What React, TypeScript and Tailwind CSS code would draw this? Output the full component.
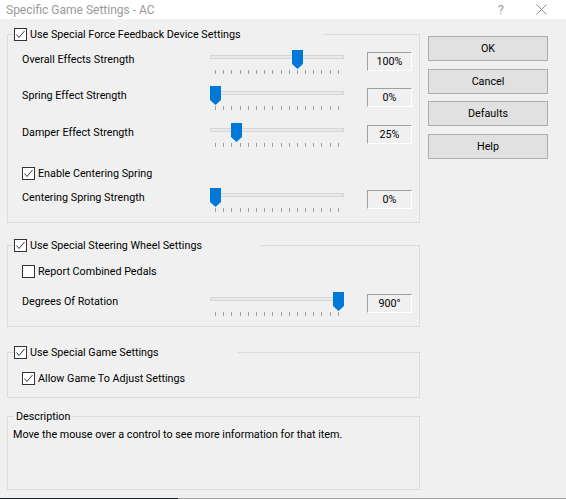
import React from 'react';

const CheckBox = ({ checked }: { checked: boolean }) => (
  <span className="flex h-[13px] w-[13px] shrink-0 items-center justify-center border border-[#333333] bg-white">
    {checked && (
      <svg width="11" height="11" viewBox="0 0 11 11">
        <path d="M1.5 5.5 L4 8.5 L9.5 2" stroke="#333333" strokeWidth="1" fill="none" />
      </svg>
    )}
  </span>
);

const CheckLabel = ({ checked, label }: { checked: boolean; label: string }) => (
  <div className="flex h-[14px] items-center gap-[3px] leading-[14px]">
    <CheckBox checked={checked} />
    <span className="pt-[2px]">{label}</span>
  </div>
);

const Slider = ({ frac }: { frac: number }) => (
  <div className="relative h-[24px] w-[134px]">
    <div className="mt-[5px] h-[4px] w-full border border-[#d6d6d6] bg-[#e7eaea]" />
    <div className="mt-[11px] flex justify-between px-[5px]">
      {Array.from({ length: 16 }).map((_, i) => (
        <span key={i} className="h-[4px] w-px bg-[#a0a0a0]" />
      ))}
    </div>
    <svg
      className="absolute top-0"
      style={{ left: Math.round(frac * 123) }}
      width="11"
      height="19"
      viewBox="0 0 11 19"
    >
      <polygon points="0,0 11,0 11,14 5.5,19 0,14" fill="#0078d7" />
    </svg>
  </div>
);

const SliderRow = ({
  label,
  frac,
  value,
  className,
}: {
  label: string;
  frac: number;
  value: string;
  className: string;
}) => (
  <div className={`flex items-start pl-[14px] ${className}`}>
    <span className="mt-[3px] w-[188px] leading-[14px]">{label}</span>
    <Slider frac={frac} />
    <div className="ml-[23px] mt-[2px] flex h-[19px] w-[45px] items-center justify-center border border-t-[#a0a0a0] border-l-[#a0a0a0] border-b-white border-r-white pt-[1px]">
      {value}
    </div>
  </div>
);

const Button = ({ label, className }: { label: string; className: string }) => (
  <button
    className={`flex h-[25px] w-[120px] items-center justify-center border border-[#adadad] bg-[#e1e1e1] pt-[1px] text-black ${className}`}
  >
    {label}
  </button>
);

export default function App() {
  return (
    <div className="flex h-[499px] w-[566px] flex-col overflow-hidden bg-[#f0f0f0] font-['Roboto',sans-serif] text-[10.75px] text-black">
      {/* title bar */}
      <div className="flex h-[19px] shrink-0 items-center bg-white text-[12px] text-[#9a9a9a]">
        <span className="ml-[6px] leading-[14px]">Specific Game Settings - AC</span>
        <span className="ml-auto mr-[32px] text-[13px] leading-[14px] text-[#a0a0a0]">?</span>
        <svg className="mr-[19px]" width="11" height="11" viewBox="0 0 11 11">
          <path d="M0.5 0.5 L10.5 10.5 M10.5 0.5 L0.5 10.5" stroke="#909090" strokeWidth="1" fill="none" />
        </svg>
      </div>

      <div className="flex flex-1">
        {/* left column */}
        <div className="ml-[7px] flex w-[413px] flex-col">
          <fieldset className="mt-[8px] border border-[#dcdcdc] pb-[10px]">
            <legend className="ml-[6px] w-[309px]">
              <CheckLabel checked label="Use Special Force Feedback Device Settings" />
            </legend>
            <SliderRow className="mt-[9px]" label="Overall Effects Strength" frac={100 / 150} value="100%" />
            <SliderRow className="mt-[12px]" label="Spring Effect Strength" frac={0} value="0%" />
            <SliderRow className="mt-[13px]" label="Damper Effect Strength" frac={25 / 150} value="25%" />
            <div className="mt-[19px] pl-[14px]">
              <CheckLabel checked label="Enable Centering Spring" />
            </div>
            <SliderRow className="mt-[8px]" label="Centering Spring Strength" frac={0} value="0%" />
          </fieldset>

          <fieldset className="mt-[15px] border border-[#dcdcdc] pb-[10px]">
            <legend className="ml-[6px] w-[246px]">
              <CheckLabel checked label="Use Special Steering Wheel Settings" />
            </legend>
            <div className="mt-[12px] pl-[14px]">
              <CheckLabel checked={false} label="Report Combined Pedals" />
            </div>
            <SliderRow className="mt-[14px]" label="Degrees Of Rotation" frac={1} value="900°" />
          </fieldset>

          <fieldset className="mt-[18px] border border-[#dcdcdc] pb-[12px]">
            <legend className="ml-[6px] w-[224px]">
              <CheckLabel checked label="Use Special Game Settings" />
            </legend>
            <div className="mt-[12px] pl-[14px]">
              <CheckLabel checked label="Allow Game To Adjust Settings" />
            </div>
          </fieldset>

          <fieldset className="mt-[11px] border border-[#dcdcdc] pb-[47px]">
            <legend className="ml-[6px] px-[2px]">
              <div className="h-[14px] pt-[1px] leading-[14px]">Description</div>
            </legend>
            <p className="mt-[5px] pl-[5px] leading-[14px]">
              Move the mouse over a control to see more information for that item.
            </p>
          </fieldset>
        </div>

        {/* buttons */}
        <div className="ml-[8px] flex flex-col">
          <Button className="mt-[17px]" label="OK" />
          <Button className="mt-[8px]" label="Cancel" />
          <Button className="mt-[7px]" label="Defaults" />
          <Button className="mt-[8px]" label="Help" />
        </div>
      </div>

      <div className="flex h-[1px] shrink-0">
        <div className="w-[178px] bg-[#1e2228]" />
        <div className="flex-1 bg-[#a0a0a0]" />
      </div>
    </div>
  );
}
